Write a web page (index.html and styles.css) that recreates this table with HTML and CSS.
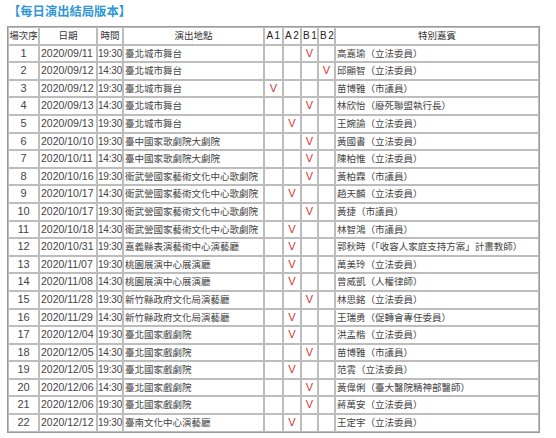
FILE: index.html
```html
<!DOCTYPE html>
<html lang="zh-Hant">
<head>
<meta charset="utf-8">
<title>每日演出結局版本</title>
<link rel="stylesheet" href="styles.css">
</head>
<body>
<h2 class="title">【每日演出結局版本】</h2>
<table class="sched">
<thead>
<tr><th class="c-no">場次序</th><th class="c-date">日期</th><th class="c-time">時間</th><th class="c-venue">演出地點</th><th class="c-a1 lat">A1</th><th class="c-a2 lat">A2</th><th class="c-v lat">B1</th><th class="c-v lat">B2</th><th class="c-guest">特別嘉賓</th></tr>
</thead>
<tbody>
<tr><td class="no">1</td><td class="num">2020/09/11</td><td class="tm">19:30</td><td class="txt">臺北城市舞台</td><td class="v"></td><td class="v"></td><td class="v">V</td><td class="v"></td><td class="txt">高嘉瑜（立法委員）</td></tr>
<tr><td class="no">2</td><td class="num">2020/09/12</td><td class="tm">14:30</td><td class="txt">臺北城市舞台</td><td class="v"></td><td class="v"></td><td class="v"></td><td class="v">V</td><td class="txt">邱顯智（立法委員）</td></tr>
<tr><td class="no">3</td><td class="num">2020/09/12</td><td class="tm">19:30</td><td class="txt">臺北城市舞台</td><td class="v">V</td><td class="v"></td><td class="v"></td><td class="v"></td><td class="txt">苗博雅（市議員）</td></tr>
<tr><td class="no">4</td><td class="num">2020/09/13</td><td class="tm">14:30</td><td class="txt">臺北城市舞台</td><td class="v"></td><td class="v"></td><td class="v">V</td><td class="v"></td><td class="txt">林欣怡（廢死聯盟執行長）</td></tr>
<tr><td class="no">5</td><td class="num">2020/09/13</td><td class="tm">19:30</td><td class="txt">臺北城市舞台</td><td class="v"></td><td class="v">V</td><td class="v"></td><td class="v"></td><td class="txt">王婉諭（立法委員）</td></tr>
<tr><td class="no">6</td><td class="num">2020/10/10</td><td class="tm">19:30</td><td class="txt">臺中國家歌劇院大劇院</td><td class="v"></td><td class="v"></td><td class="v">V</td><td class="v"></td><td class="txt">黃國書（立法委員）</td></tr>
<tr><td class="no">7</td><td class="num">2020/10/11</td><td class="tm">14:30</td><td class="txt">臺中國家歌劇院大劇院</td><td class="v"></td><td class="v"></td><td class="v">V</td><td class="v"></td><td class="txt">陳柏惟（立法委員）</td></tr>
<tr><td class="no">8</td><td class="num">2020/10/16</td><td class="tm">19:30</td><td class="txt">衛武營國家藝術文化中心歌劇院</td><td class="v"></td><td class="v"></td><td class="v">V</td><td class="v"></td><td class="txt">黃柏霖（市議員）</td></tr>
<tr><td class="no">9</td><td class="num">2020/10/17</td><td class="tm">14:30</td><td class="txt">衛武營國家藝術文化中心歌劇院</td><td class="v"></td><td class="v">V</td><td class="v"></td><td class="v"></td><td class="txt">趙天麟（立法委員）</td></tr>
<tr><td class="no">10</td><td class="num">2020/10/17</td><td class="tm">19:30</td><td class="txt">衛武營國家藝術文化中心歌劇院</td><td class="v"></td><td class="v"></td><td class="v">V</td><td class="v"></td><td class="txt">黃捷（市議員）</td></tr>
<tr><td class="no">11</td><td class="num">2020/10/18</td><td class="tm">14:30</td><td class="txt">衛武營國家藝術文化中心歌劇院</td><td class="v"></td><td class="v">V</td><td class="v"></td><td class="v"></td><td class="txt">林智鴻（市議員）</td></tr>
<tr><td class="no">12</td><td class="num">2020/10/31</td><td class="tm">19:30</td><td class="txt">嘉義縣表演藝術中心演藝廳</td><td class="v"></td><td class="v">V</td><td class="v"></td><td class="v"></td><td class="txt">郭秋時（「收容人家庭支持方案」計畫教師）</td></tr>
<tr><td class="no">13</td><td class="num">2020/11/07</td><td class="tm">19:30</td><td class="txt">桃園展演中心展演廳</td><td class="v"></td><td class="v">V</td><td class="v"></td><td class="v"></td><td class="txt">萬美玲（立法委員）</td></tr>
<tr><td class="no">14</td><td class="num">2020/11/08</td><td class="tm">14:30</td><td class="txt">桃園展演中心展演廳</td><td class="v"></td><td class="v">V</td><td class="v"></td><td class="v"></td><td class="txt">曾威凱（人權律師）</td></tr>
<tr><td class="no">15</td><td class="num">2020/11/28</td><td class="tm">19:30</td><td class="txt">新竹縣政府文化局演藝廳</td><td class="v"></td><td class="v"></td><td class="v">V</td><td class="v"></td><td class="txt">林思銘（立法委員）</td></tr>
<tr><td class="no">16</td><td class="num">2020/11/29</td><td class="tm">14:30</td><td class="txt">新竹縣政府文化局演藝廳</td><td class="v"></td><td class="v">V</td><td class="v"></td><td class="v"></td><td class="txt">王瑞勇（促轉會專任委員）</td></tr>
<tr><td class="no">17</td><td class="num">2020/12/04</td><td class="tm">19:30</td><td class="txt">臺北國家戲劇院</td><td class="v"></td><td class="v">V</td><td class="v"></td><td class="v"></td><td class="txt">洪孟楷（立法委員）</td></tr>
<tr><td class="no">18</td><td class="num">2020/12/05</td><td class="tm">14:30</td><td class="txt">臺北國家戲劇院</td><td class="v"></td><td class="v"></td><td class="v">V</td><td class="v"></td><td class="txt">苗博雅（市議員）</td></tr>
<tr><td class="no">19</td><td class="num">2020/12/05</td><td class="tm">19:30</td><td class="txt">臺北國家戲劇院</td><td class="v"></td><td class="v">V</td><td class="v"></td><td class="v"></td><td class="txt">范雲（立法委員）</td></tr>
<tr><td class="no">20</td><td class="num">2020/12/06</td><td class="tm">14:30</td><td class="txt">臺北國家戲劇院</td><td class="v"></td><td class="v"></td><td class="v">V</td><td class="v"></td><td class="txt">黃偉俐（臺大醫院精神部醫師）</td></tr>
<tr><td class="no">21</td><td class="num">2020/12/06</td><td class="tm">19:30</td><td class="txt">臺北國家戲劇院</td><td class="v"></td><td class="v"></td><td class="v">V</td><td class="v"></td><td class="txt">蔣萬安（立法委員）</td></tr>
<tr><td class="no">22</td><td class="num">2020/12/12</td><td class="tm">19:30</td><td class="txt">臺南文化中心演藝廳</td><td class="v"></td><td class="v">V</td><td class="v"></td><td class="v"></td><td class="txt">王定宇（立法委員）</td></tr>
</tbody>
</table>
</body>
</html>
```
FILE: styles.css
```css
html, body {
  margin: 0;
  background: #ffffff;
}
body {
  padding: 2px 7px 0 7px;
  font-family: "Liberation Sans", "Noto Sans CJK TC", sans-serif;
  color: #444;
}
.title {
  margin: 0;
  padding-left: 1px;
  font-family: "Noto Sans CJK TC", sans-serif;
  font-size: 12.3px;
  line-height: 18px;
  font-weight: bold;
  color: #2f97d6;
}
.sched {
  margin-top: 6px;
  width: 533px;
  table-layout: fixed;
  border-collapse: separate;
  border-spacing: 0;
  border: 1px solid #9a9a9a;
}
.sched th,
.sched td {
  box-sizing: border-box;
  border: 1px solid #bdbdbd;
  padding: 0 0 0 1px;
  line-height: 15.6px;
  height: 17.6px;
  white-space: nowrap;
  overflow: hidden;
  vertical-align: middle;
}
.sched th {
  font-family: "Noto Sans CJK TC", sans-serif;
  font-size: 9.5px;
  font-weight: normal;
  color: #333;
  text-align: center;
  padding: 0;
}
.sched th.lat {
  font-family: "Liberation Sans", sans-serif;
  font-size: 10px;
  letter-spacing: 1.5px;
  text-indent: 1px;
  color: #222;
}
.c-no { width: 31px; }
.c-date { width: 58px; }
.c-time { width: 26px; }
.c-venue { width: 141px; }
.c-a1 { width: 19px; }
.c-a2 { width: 18px; }
.c-v { width: 17px; }
.c-guest { width: 204px; }

.sched td.no {
  text-align: center;
  font-size: 11px;
  padding: 0;
}
.sched td.num {
  font-size: 10.5px;
  color: #444;
}
.sched td.tm {
  font-size: 10px;
  letter-spacing: -0.2px;
  padding: 0;
  color: #444;
}
.sched td.txt {
  font-family: "Noto Sans CJK TC", sans-serif;
  font-size: 9.5px;
  color: #444;
}
.sched td.v {
  text-align: center;
  padding: 0;
  color: #d8322c;
  font-size: 11px;
}
```
